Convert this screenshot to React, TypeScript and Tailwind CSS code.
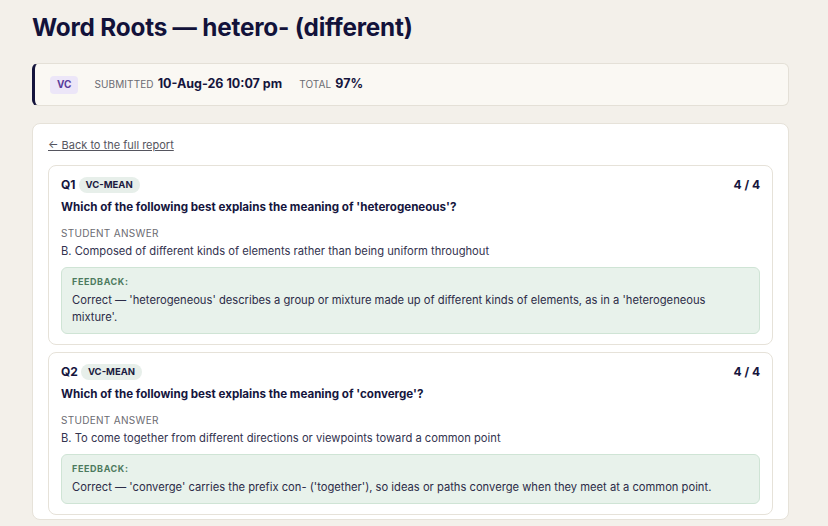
const questions = [
  {
    id: 'Q1',
    tag: 'VC-MEAN',
    score: '4 / 4',
    question: "Which of the following best explains the meaning of 'heterogeneous'?",
    answer: 'B. Composed of different kinds of elements rather than being uniform throughout',
    feedback:
      "Correct — 'heterogeneous' describes a group or mixture made up of different kinds of elements, as in a 'heterogeneous mixture'.",
  },
  {
    id: 'Q2',
    tag: 'VC-MEAN',
    score: '4 / 4',
    question: "Which of the following best explains the meaning of 'converge'?",
    answer: 'B. To come together from different directions or viewpoints toward a common point',
    feedback:
      "Correct — 'converge' carries the prefix con- ('together'), so ideas or paths converge when they meet at a common point.",
  },
];

export default function App() {
  return (
    <div
      className="h-[526px] overflow-hidden bg-[#f3f0ea] text-[#1b1b3f]"
      style={{ fontFamily: 'Inter, "Liberation Sans", sans-serif' }}
    >
      <div className="w-[757px] ml-8 pt-[11px]">
        {/* Title */}
        <h1 className="text-[24.3px] leading-[32px] font-bold text-[#12123a] tracking-[-0.2px]">
          Word Roots — hetero- (different)
        </h1>

        {/* Summary bar */}
        <div className="mt-[20px] h-[43px] flex items-center bg-[#faf8f3] border border-[#e4e0d7] border-l-[3px] border-l-[#14143c] rounded-md pl-[15px]">
          <span className="px-[7px] h-[18px] flex items-center rounded bg-[#ece6f8] text-[#5a3e9c] text-[10px] font-bold">
            VC
          </span>
          <span className="ml-[16px] text-[10px] tracking-[0.1px] text-[#6b6b72]">SUBMITTED</span>
          <span className="ml-[4px] text-[12.5px] font-bold text-[#15153d]">10-Aug-26 10:07 pm</span>
          <span className="ml-[17px] text-[10px] tracking-[0.1px] text-[#6b6b72]">TOTAL</span>
          <span className="ml-[4px] text-[12.5px] font-bold text-[#15153d]">97%</span>
        </div>

        {/* Main card */}
        <div className="mt-[17px] bg-white border border-[#e6e2d9] rounded-lg px-[15px] pt-[13px] pb-[4px]">
          <a href="#" className="block w-fit text-[11px] leading-[16px] text-[#55555e] underline">
            ← Back to the full report
          </a>

          <div className="mt-[12px] flex flex-col gap-[7px]">
            {questions.map((q) => (
              <div key={q.id} className="border border-[#e6e2d9] rounded-lg px-[12px] pt-[10px] pb-[10px]">
                <div className="flex items-center justify-between h-[18px]">
                  <div className="flex items-center gap-[3px]">
                    <span className="text-[12px] font-bold text-[#15153d]">{q.id}</span>
                    <span className="h-[16px] px-[7px] flex items-center rounded-full bg-[#e7efea] text-[9.5px] font-bold text-[#1b1b3f]">
                      {q.tag}
                    </span>
                  </div>
                  <span className="text-[12px] font-bold text-[#15153d]">{q.score}</span>
                </div>
                <p className="mt-[4px] text-[11.6px] leading-[18px] font-bold text-[#15153d]">{q.question}</p>
                <p className="mt-[10px] text-[10px] leading-[14px] tracking-[0.3px] text-[#6b6b72]">STUDENT ANSWER</p>
                <p className="mt-[3px] text-[11.2px] leading-[16px] text-[#33334f]">{q.answer}</p>
                <div className="mt-[8px] bg-[#e8f2eb] border border-[#cfe4d5] rounded-md pl-[10px] pr-[14px] pt-[7px] pb-[7px]">
                  <p className="text-[9px] leading-[14px] font-bold tracking-[0.6px] text-[#4d7a5e]">FEEDBACK:</p>
                  <p className="mt-[3px] text-[11.2px] leading-[17px] text-[#2c2c48]">{q.feedback}</p>
                </div>
              </div>
            ))}
          </div>
        </div>
      </div>
    </div>
  );
}
